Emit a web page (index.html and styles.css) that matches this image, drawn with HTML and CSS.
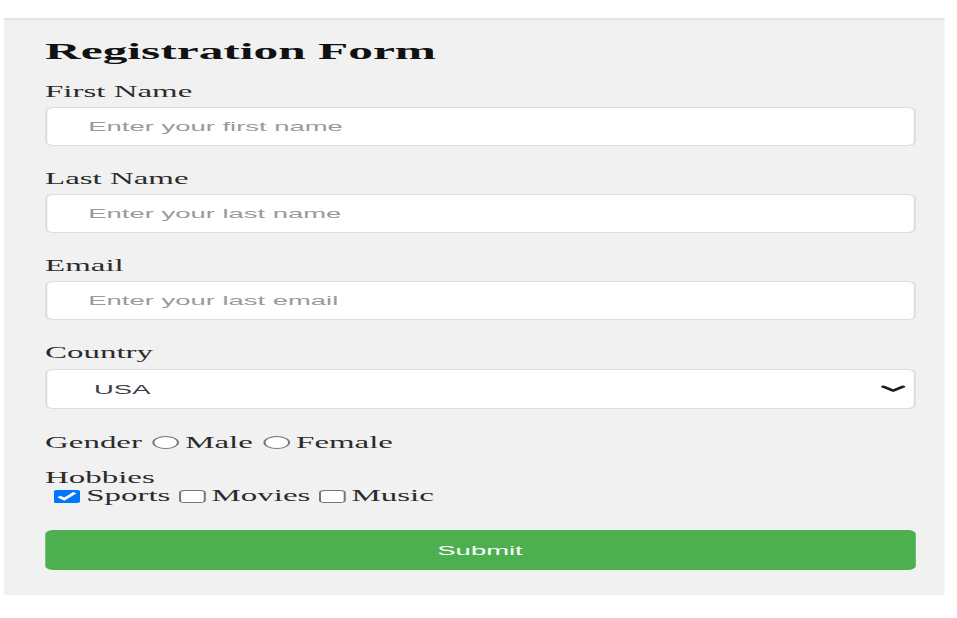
FILE: index.html
```html
<!DOCTYPE html>
<html lang="en">
<head>
<meta charset="utf-8">
<title>Registration Form</title>
<link rel="stylesheet" href="styles.css">
</head>
<body>
<div class="stage">
  <form class="card">
    <h2 class="title">Registration Form</h2>

    <div class="field">
      <label class="label" for="first">First Name</label>
      <input class="input" id="first" type="text" placeholder="Enter your first name">
    </div>

    <div class="field">
      <label class="label" for="last">Last Name</label>
      <input class="input" id="last" type="text" placeholder="Enter your last name">
    </div>

    <div class="field">
      <label class="label" for="email">Email</label>
      <input class="input" id="email" type="email" placeholder="Enter your last email">
    </div>

    <div class="field">
      <label class="label" for="country">Country</label>
      <div class="select-wrap">
        <select class="input select" id="country">
          <option>USA</option>
          <option>Canada</option>
          <option>UK</option>
        </select>
        <svg class="chevron" viewBox="0 0 12 8" width="12" height="8" aria-hidden="true">
          <path d="M1.2 1.6 L6 5.6 L10.8 1.6" fill="none" stroke="#1e1e1e" stroke-width="2.2" stroke-linecap="round" stroke-linejoin="round"/>
        </svg>
      </div>
    </div>

    <div class="gender">Gender<input class="radio" type="radio" name="gender" id="male"><label for="male">Male</label><input class="radio" type="radio" name="gender" id="female"><label for="female">Female</label></div>

    <div class="hobbies">
      <div class="hobbies-title">Hobbies</div>
      <div class="hobbies-list"><input class="check" type="checkbox" id="sports" checked><label for="sports">Sports</label><input class="check" type="checkbox" id="movies"><label for="movies">Movies</label><input class="check" type="checkbox" id="music"><label for="music">Music</label></div>
    </div>

    <button class="submit" type="submit">Submit</button>
  </form>
</div>
</body>
</html>
```

FILE: styles.css
```css
html, body {
  margin: 0;
  padding: 0;
  background: #ffffff;
}

body {
  font-family: "Liberation Serif", "Times New Roman", serif;
  font-size: 16px;
  color: #2b2b2b;
  overflow: hidden;
}

/* The reference is a horizontally stretched capture of a narrow form */
.stage {
  width: 465px;
  padding-top: 18px;
  transform: scaleX(2.058);
  transform-origin: 0 0;
}

.card {
  box-sizing: border-box;
  width: 456.3px;
  margin-left: 2.4px;
  padding: 17px 14.1px 25px 19.5px;
  background: #f1f1f1;
  border-top: 2px solid #e2e2e2;
}

.title {
  margin: 0 0 18px;
  font-size: 24px;
  line-height: 28px;
  font-weight: bold;
  color: #111111;
}

.field {
  display: flex;
  flex-direction: column;
  margin-bottom: 24px;
}

.label {
  line-height: 18px;
  margin-bottom: 6px;
  color: #2b2b2b;
}

.input {
  box-sizing: border-box;
  width: 100%;
  height: 39px;
  margin: 0;
  padding: 0 20px;
  border: 1px solid #dddddd;
  border-radius: 4px;
  background: #ffffff;
  font-family: "Liberation Sans", Arial, sans-serif;
  font-size: 13.33px;
  color: #333333;
  outline: none;
}

.input::placeholder {
  color: #9a9a9a;
}

.select-wrap {
  position: relative;
  margin-top: 1px;
}

.select {
  display: block;
  height: 40px;
  padding-left: 22.8px;
  -webkit-appearance: none;
  appearance: none;
  color: #3a3f4a;
}

.chevron {
  position: absolute;
  right: 4.9px;
  top: 16px;
  width: 12px;
  height: 8px;
  pointer-events: none;
}

.gender {
  line-height: 20px;
  margin-bottom: 16px;
}

.radio {
  margin: 3px 3px 0 5px;
  vertical-align: -1px;
}

.hobbies-title {
  line-height: 18px;
}

.hobbies-list {
  line-height: 18px;
  margin-bottom: 24px;
}

.check {
  margin: 3px 3px 3px 4px;
  vertical-align: -2px;
}

.submit {
  display: block;
  box-sizing: border-box;
  width: 100%;
  height: 40px;
  margin: 0;
  border: none;
  border-radius: 4px;
  background: #4caf50;
  color: #ffffff;
  font-family: "Liberation Sans", Arial, sans-serif;
  font-size: 13.33px;
  cursor: pointer;
}
```
